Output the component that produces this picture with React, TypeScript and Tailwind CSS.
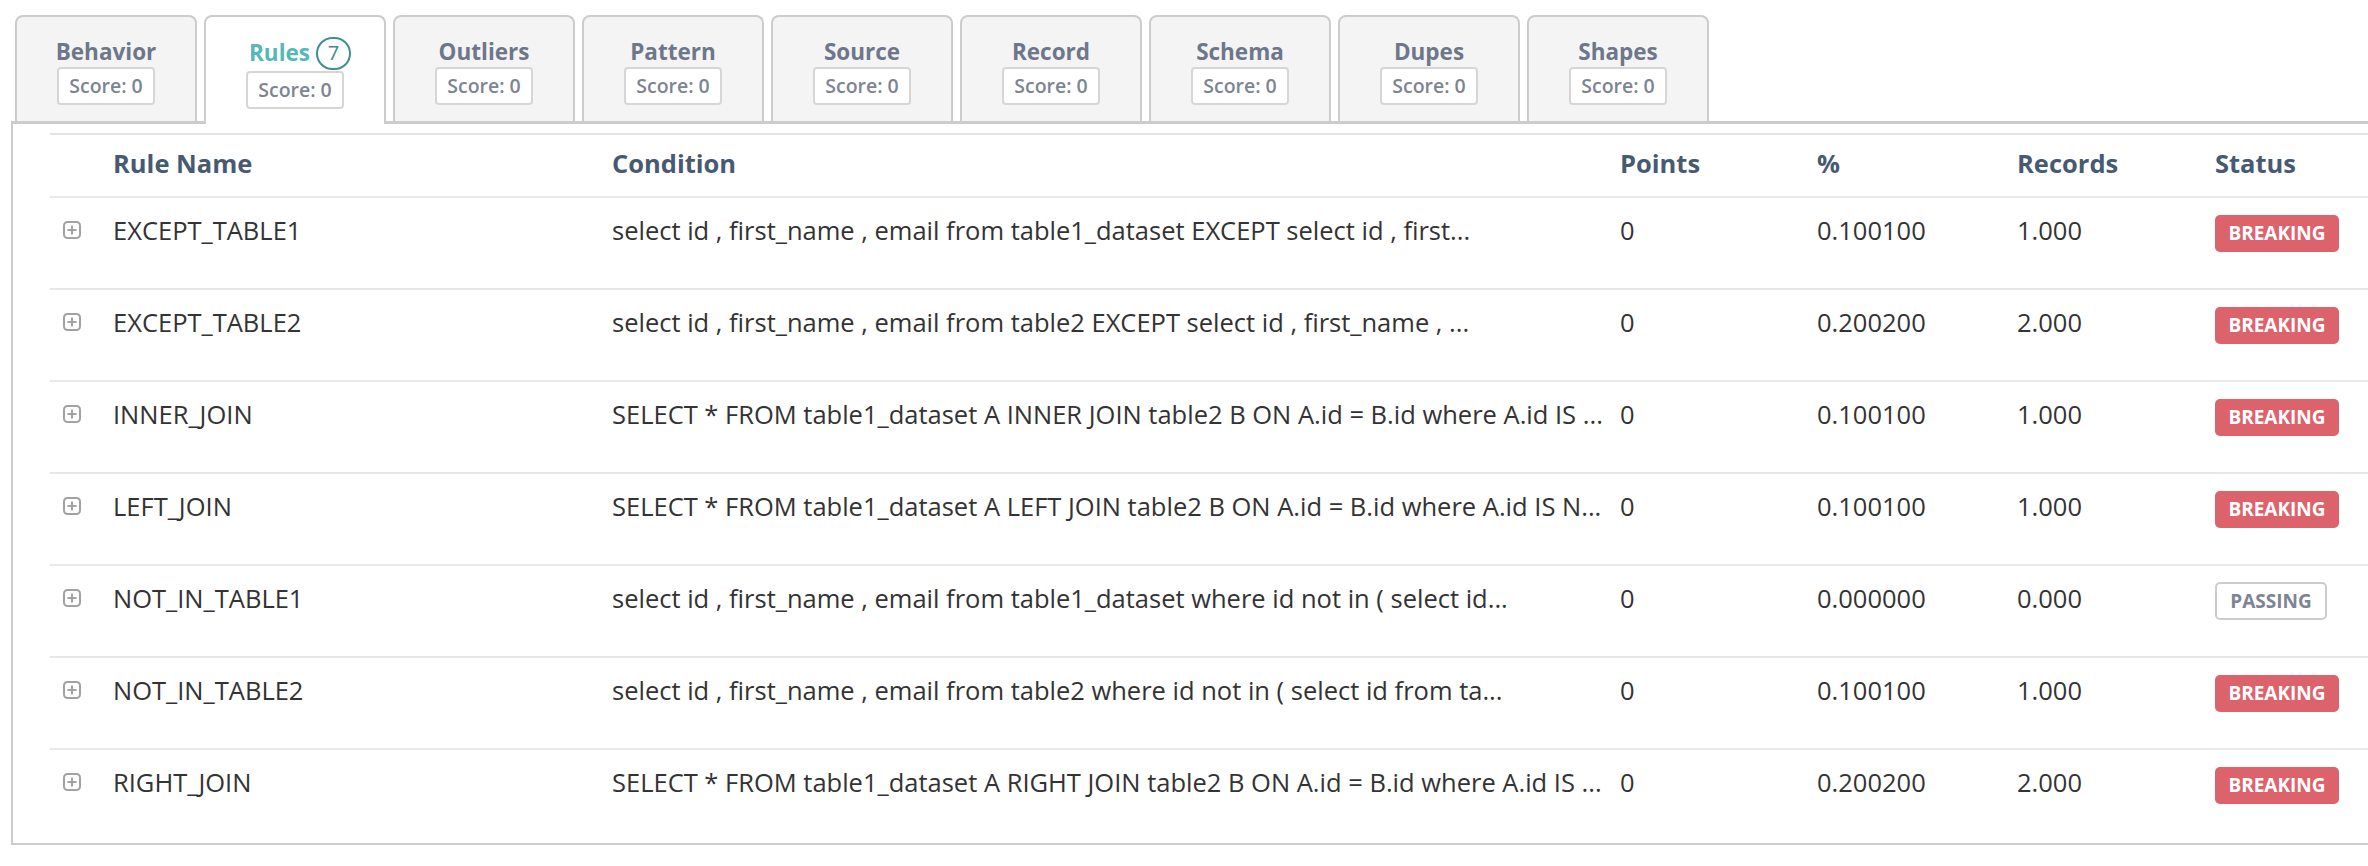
const TABS = ['Behavior', 'Rules', 'Outliers', 'Pattern', 'Source', 'Record', 'Schema', 'Dupes', 'Shapes'];

type Rule = {
  name: string;
  condition: string;
  points: string;
  pct: string;
  records: string;
  passing?: boolean;
};

const RULES: Rule[] = [
  { name: 'EXCEPT_TABLE1', condition: 'select id , first_name , email from table1_dataset EXCEPT select id , first...', points: '0', pct: '0.100100', records: '1.000' },
  { name: 'EXCEPT_TABLE2', condition: 'select id , first_name , email from table2 EXCEPT select id , first_name , ...', points: '0', pct: '0.200200', records: '2.000' },
  { name: 'INNER_JOIN', condition: 'SELECT * FROM table1_dataset A INNER JOIN table2 B ON A.id = B.id where A.id IS ...', points: '0', pct: '0.100100', records: '1.000' },
  { name: 'LEFT_JOIN', condition: 'SELECT * FROM table1_dataset A LEFT JOIN table2 B ON A.id = B.id where A.id IS N...', points: '0', pct: '0.100100', records: '1.000' },
  { name: 'NOT_IN_TABLE1', condition: 'select id , first_name , email from table1_dataset where id not in ( select id...', points: '0', pct: '0.000000', records: '0.000', passing: true },
  { name: 'NOT_IN_TABLE2', condition: 'select id , first_name , email from table2 where id not in ( select id from ta...', points: '0', pct: '0.100100', records: '1.000' },
  { name: 'RIGHT_JOIN', condition: 'SELECT * FROM table1_dataset A RIGHT JOIN table2 B ON A.id = B.id where A.id IS ...', points: '0', pct: '0.200200', records: '2.000' },
];

const COLS = 'grid grid-cols-[63px_499px_1008px_197px_200px_198px_1fr]';

function ExpandIcon() {
  return (
    <svg width="18" height="18" viewBox="0 0 18 18" fill="none">
      <rect x="1" y="1" width="16" height="16" rx="3.5" stroke="#a2a2a2" strokeWidth="2" />
      <path d="M9 4.5v9M4.5 9h9" stroke="#a2a2a2" strokeWidth="2" />
    </svg>
  );
}

function ScoreBox() {
  return (
    <div className="w-[98px] h-[38px] flex items-center justify-center bg-white border-2 border-[#d6d6d6] rounded-[4px] text-[19.5px] font-semibold text-[#7d8494]">
      Score: 0
    </div>
  );
}

function Tab({ label, active }: { label: string; active: boolean }) {
  if (active) {
    return (
      <div className="relative z-10 -mb-[3px] w-[182px] h-[109px] bg-white border-2 border-b-0 border-[#cccccc] rounded-t-[8px] flex flex-col items-center pt-[19px]">
        <div className="flex items-center h-[34px] gap-[6px] pl-[10px]">
          <span className="text-[22.5px] font-bold text-[#55b7b6] leading-[30px]">{label}</span>
          <span className="w-[35px] h-[33px] rounded-full border-2 border-[#3f8f8e] flex items-center justify-center text-[20px] text-[#3f8a89]">7</span>
        </div>
        <div className="mt-[1px]">
          <ScoreBox />
        </div>
      </div>
    );
  }
  return (
    <div className="w-[182px] h-[106px] bg-[#f4f4f4] border-2 border-b-0 border-[#cccccc] rounded-t-[8px] flex flex-col items-center pt-[20px]">
      <span className="text-[22.5px] font-bold text-[#6e778a] leading-[30px]">{label}</span>
      <ScoreBox />
    </div>
  );
}

function StatusBadge({ passing }: { passing?: boolean }) {
  if (passing) {
    return (
      <span className="inline-flex items-center justify-center w-[112px] h-[38px] border-2 border-[#cccccc] rounded-[5px] bg-white text-[19px] font-bold text-[#7d8595]">
        PASSING
      </span>
    );
  }
  return (
    <span className="inline-flex items-center justify-center w-[124px] h-[37px] rounded-[5px] bg-[#dc626b] text-[19px] font-bold text-white">
      BREAKING
    </span>
  );
}

export default function App() {
  return (
    <div className="min-h-[866px] bg-white overflow-hidden" style={{ fontFamily: '"Open Sans", sans-serif' }}>
      <div className="pt-[15px] pl-[15px] flex items-end gap-[7px]">
        {TABS.map(t => (
          <Tab key={t} label={t} active={t === 'Rules'} />
        ))}
      </div>

      <div className="ml-[11px] border-l-2 border-t-[3px] border-b-2 border-[#cccccc] pl-[37px] pt-[9px] pb-[3px]">
        <div className={`${COLS} h-[63px] items-start pt-[11px] border-t-2 border-[#e3e3e3] text-[25.5px] leading-[34px] font-bold text-[#475a72]`}>
          <span />
          <span>Rule Name</span>
          <span>Condition</span>
          <span>Points</span>
          <span>%</span>
          <span>Records</span>
          <span>Status</span>
        </div>
        {RULES.map(r => (
          <div
            key={r.name}
            className={`${COLS} h-[92px] items-start pt-[14px] border-t-2 border-[#e8e8e8] text-[25.5px] leading-[36px] text-[#333333]`}
          >
            <span className="pl-[13px] pt-[9px]">
              <ExpandIcon />
            </span>
            <span>{r.name}</span>
            <span className="whitespace-nowrap overflow-hidden pr-[8px]">{r.condition}</span>
            <span>{r.points}</span>
            <span>{r.pct}</span>
            <span>{r.records}</span>
            <span>
              <StatusBadge passing={r.passing} />
            </span>
          </div>
        ))}
      </div>
    </div>
  );
}
